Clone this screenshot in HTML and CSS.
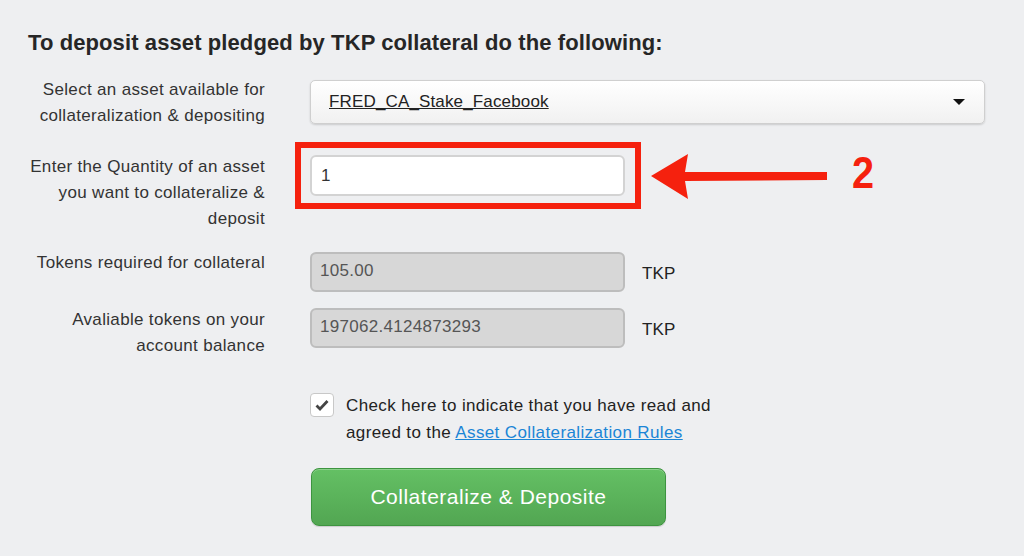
FILE: index.html
```html
<!DOCTYPE html>
<html>
<head>
<meta charset="utf-8">
<link rel="stylesheet" href="styles.css">
</head>
<body>
<div class="page">
  <h2 class="title">To deposit asset pledged by TKP collateral do the following:</h2>

  <div class="row row-select">
    <div class="label">Select an asset available for<br>collateralization &amp; depositing</div>
    <div class="control">
      <div class="select">
        <span class="select-text">FRED_CA_Stake_Facebook</span>
        <span class="caret"></span>
      </div>
    </div>
  </div>

  <div class="row row-qty">
    <div class="label">Enter the Quantity of an asset<br>you want to collateralize &amp;<br>deposit</div>
    <div class="control">
      <div class="qty-wrap">
        <div class="input">1</div>
        <div class="red-box"></div>
        <svg class="red-arrow" width="190" height="52" viewBox="0 0 190 52">
          <path d="M2 25 L39 3 L36 21 L178 21 L178 29 L36 30 L39 48 Z" fill="#f5210e"/>
        </svg>
        <span class="red-num">2</span>
      </div>
    </div>
  </div>

  <div class="row row-tokens">
    <div class="label">Tokens required for collateral</div>
    <div class="control inline">
      <div class="input disabled">105.00</div>
      <span class="unit">TKP</span>
    </div>
  </div>

  <div class="row row-avail">
    <div class="label">Avaliable tokens on your<br>account balance</div>
    <div class="control inline">
      <div class="input disabled">197062.4124873293</div>
      <span class="unit">TKP</span>
    </div>
  </div>

  <div class="row row-check">
    <div class="label"></div>
    <div class="control check">
      <span class="checkbox">
        <svg width="14" height="12" viewBox="0 0 14 12"><path d="M1.5 6.5 L5 10 L12.5 2" fill="none" stroke="#444" stroke-width="2.8"/></svg>
      </span>
      <span class="check-text">Check here to indicate that you have read and<br>agreed to the <a href="#" class="link">Asset Collateralization Rules</a></span>
    </div>
  </div>

  <div class="row row-btn">
    <div class="label"></div>
    <div class="control">
      <button class="btn">Collateralize &amp; Deposite</button>
    </div>
  </div>
</div>
</body>
</html>
```

FILE: styles.css
```css
html, body {
  margin: 0;
  padding: 0;
  background: #eeeff1;
  font-family: "Liberation Sans", Arial, sans-serif;
  color: #333;
}
.page {
  padding: 31px 0 0 28px;
  width: 996px;
  height: 525px;
  overflow: hidden;
}
.title {
  margin: 0 0 22px 0;
  font-size: 22px;
  line-height: 24px;
  letter-spacing: 0.1px;
  font-weight: bold;
  color: #262626;
}
.row {
  display: flex;
  align-items: flex-start;
}
.label {
  width: 237px;
  flex: none;
  text-align: right;
  font-size: 17px;
  line-height: 26px;
  letter-spacing: 0.33px;
  color: #333;
}
.control {
  margin-left: 45px;
}
.control.inline {
  display: flex;
  align-items: center;
}
.row-select { margin-bottom: 25px; }
.row-select .control { margin-top: 3px; }
.select {
  width: 675px;
  height: 44px;
  box-sizing: border-box;
  border: 1px solid #cfcfcf;
  border-radius: 5px;
  background: linear-gradient(#ffffff, #f1f1f1);
  box-shadow: 0 1px 2px rgba(0,0,0,0.15);
  display: flex;
  align-items: center;
  justify-content: space-between;
  padding: 0 19px 0 18px;
}
.select-text {
  font-size: 17px;
  letter-spacing: 0.15px;
  text-decoration: underline;
  color: #222;
}
.caret {
  width: 0;
  height: 0;
  border-left: 6px solid transparent;
  border-right: 6px solid transparent;
  border-top: 6px solid #111;
}
.row-qty { margin-bottom: 18px; }
.row-qty .control { margin-top: 1px; }
.qty-wrap {
  position: relative;
}
.input {
  width: 315px;
  height: 41px;
  box-sizing: border-box;
  border: 2px solid #d3d3d3;
  border-radius: 6px;
  background: #fff;
  font-size: 17px;
  letter-spacing: 0.3px;
  line-height: 37px;
  padding-left: 9px;
  color: #333;
}
.input.disabled {
  height: 40px;
  line-height: 34px;
  padding-left: 8px;
  background: #d7d7d7;
  border-color: #bdbdbd;
  color: #555;
}
.red-box {
  position: absolute;
  left: -15px;
  top: -13px;
  width: 346px;
  height: 67px;
  box-sizing: border-box;
  border: 6px solid #f5210e;
}
.red-arrow {
  position: absolute;
  left: 339px;
  top: -4px;
}
.red-num {
  position: absolute;
  left: 542px;
  top: -6px;
  font-size: 44px;
  line-height: 48px;
  font-weight: bold;
  color: #f5210e;
  transform: scaleX(0.9);
  transform-origin: left;
}
.unit {
  margin-left: 17px;
  margin-top: 4px;
  font-size: 17px;
  letter-spacing: 0.2px;
  color: #222;
}
.row-tokens { margin-bottom: 15px; }
.row-tokens .control { margin-top: 2px; }
.row-avail { margin-bottom: 33px; }
.row-avail .control { margin-top: 1px; }
.control.check {
  display: flex;
  align-items: flex-start;
}
.checkbox {
  width: 24px;
  height: 24px;
  box-sizing: border-box;
  border: 1px solid #c8c8c8;
  border-radius: 4px;
  background: #fff;
  display: flex;
  align-items: center;
  justify-content: center;
  margin-top: 1px;
  flex: none;
}
.check-text {
  margin-left: 12px;
  font-size: 17px;
  letter-spacing: 0.38px;
  line-height: 27px;
  color: #222;
}
.link {
  color: #1a85d6;
  text-decoration: underline;
}
.row-check { margin-bottom: 22px; }
.btn {
  width: 355px;
  height: 58px;
  border: 1px solid #3d9440;
  border-radius: 8px;
  background: linear-gradient(#64c064, #52a652);
  color: #fff;
  font-family: "Liberation Sans", Arial, sans-serif;
  font-size: 21px;
  letter-spacing: 0.5px;
  box-shadow: inset 0 1px 0 rgba(255,255,255,0.25), 0 1px 1px rgba(0,0,0,0.15);
  padding: 0;
  margin-left: 1px;
}
```
